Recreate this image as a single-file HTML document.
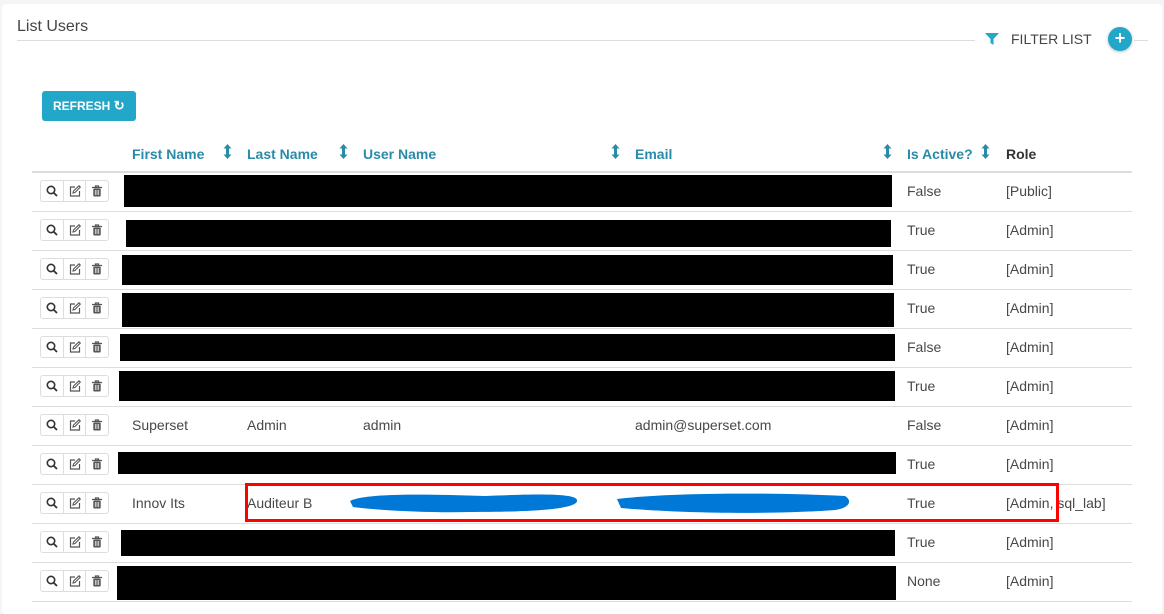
<!DOCTYPE html>
<html><head><meta charset="utf-8"><style>
*{margin:0;padding:0;box-sizing:border-box}
body{width:1164px;height:604px;background:#f5f5f5;font-family:"Liberation Sans",sans-serif;font-size:14px;color:#484848;position:relative;overflow:hidden}
.panel{position:absolute;left:2px;top:4px;width:1160px;height:610px;background:#fff;border-radius:4px}
.a{position:absolute}
.t{position:absolute;white-space:nowrap;line-height:16px}
.h{color:#2a8ba8;font-weight:bold;font-size:14px}
.line{position:absolute;left:32px;width:1100px;height:1px;background:#ddd}
.blk{position:absolute;background:#000}
.bg{position:absolute;left:40px;width:69px;height:22px;border:1px solid #ddd;border-radius:3px;display:flex;background:#fff}
.bg div{flex:1;border-right:1px solid #ddd;display:flex;align-items:center;justify-content:center}
.bg div:last-child{border-right:none}
.sort{position:absolute}
</style></head><body>
<div class="panel"></div>
<div class="t" style="left:17px;top:19px;font-size:16px;color:#444">List Users</div>
<div class="a" style="left:17px;top:40px;width:958px;height:1px;background:#ddd"></div>
<div class="a" style="left:1134px;top:40px;width:14px;height:1px;background:#ddd"></div>
<svg class="a" style="left:985px;top:32px" width="14" height="14" viewBox="0 0 14 14"><path d="M0 1h14L8.5 7v6l-3-2V7z" fill="#22a7c9"/></svg>
<div class="t" style="left:1011px;top:31px;font-size:14px;color:#444">FILTER LIST</div>
<div class="a" style="left:1108px;top:27px;width:24px;height:24px;border-radius:50%;background:#22a7c9;box-shadow:0 1px 3px rgba(0,0,0,.25);color:#fff;font-size:18px;line-height:23px;text-align:center;font-weight:bold">+</div>
<div class="a" style="left:42px;top:91px;width:94px;height:30px;background:#22a7c9;border-radius:3px;color:#fff;font-size:12px;font-weight:bold;line-height:30px;padding-left:11px">REFRESH <span style="font-size:13px">&#x21bb;</span></div>

<div class="t h" style="left:132px;top:146px">First Name</div>
<div class="t h" style="left:247px;top:146px">Last Name</div>
<div class="t h" style="left:363px;top:146px">User Name</div>
<div class="t h" style="left:635px;top:146px">Email</div>
<div class="t h" style="left:907px;top:146px">Is Active?</div>
<div class="t" style="left:1006px;top:146px;font-weight:bold;color:#333">Role</div>
<svg class="sort" style="left:223px;top:144px" width="9" height="15"><path d="M4.5 0L8.5 4.5H6V10.5H8.5L4.5 15L.5 10.5H3V4.5H.5Z" fill="#2a8ba8"/></svg>
<svg class="sort" style="left:339px;top:144px" width="9" height="15"><path d="M4.5 0L8.5 4.5H6V10.5H8.5L4.5 15L.5 10.5H3V4.5H.5Z" fill="#2a8ba8"/></svg>
<svg class="sort" style="left:611px;top:144px" width="9" height="15"><path d="M4.5 0L8.5 4.5H6V10.5H8.5L4.5 15L.5 10.5H3V4.5H.5Z" fill="#2a8ba8"/></svg>
<svg class="sort" style="left:883px;top:144px" width="9" height="15"><path d="M4.5 0L8.5 4.5H6V10.5H8.5L4.5 15L.5 10.5H3V4.5H.5Z" fill="#2a8ba8"/></svg>
<svg class="sort" style="left:981px;top:144px" width="9" height="15"><path d="M4.5 0L8.5 4.5H6V10.5H8.5L4.5 15L.5 10.5H3V4.5H.5Z" fill="#2a8ba8"/></svg>
<div class="line" style="top:171px;height:2px"></div>

<div class="line" style="top:211px"></div><div class="line" style="top:250px"></div><div class="line" style="top:289px"></div><div class="line" style="top:328px"></div><div class="line" style="top:367px"></div><div class="line" style="top:406px"></div><div class="line" style="top:445px"></div><div class="line" style="top:484px"></div><div class="line" style="top:523px"></div><div class="line" style="top:562px"></div><div class="line" style="top:601px"></div>

<div class="blk" style="left:124px;top:175px;width:768px;height:32px"></div>
<div class="blk" style="left:126px;top:220px;width:765px;height:27px"></div>
<div class="blk" style="left:122px;top:255px;width:771px;height:30px"></div>
<div class="blk" style="left:122px;top:293px;width:772px;height:34px"></div>
<div class="blk" style="left:120px;top:334px;width:775px;height:27px"></div>
<div class="blk" style="left:119px;top:371px;width:776px;height:30px"></div>
<div class="blk" style="left:118px;top:452px;width:778px;height:22px"></div>
<div class="blk" style="left:121px;top:530px;width:774px;height:26px"></div>
<div class="blk" style="left:117px;top:566px;width:779px;height:34px"></div>

<div class="t" style="left:907px;top:183px">False</div><div class="t" style="left:1006px;top:183px">[Public]</div>
<div class="t" style="left:907px;top:222px">True</div><div class="t" style="left:1006px;top:222px">[Admin]</div>
<div class="t" style="left:907px;top:261px">True</div><div class="t" style="left:1006px;top:261px">[Admin]</div>
<div class="t" style="left:907px;top:300px">True</div><div class="t" style="left:1006px;top:300px">[Admin]</div>
<div class="t" style="left:907px;top:339px">False</div><div class="t" style="left:1006px;top:339px">[Admin]</div>
<div class="t" style="left:907px;top:378px">True</div><div class="t" style="left:1006px;top:378px">[Admin]</div>
<div class="t" style="left:132px;top:417px">Superset</div><div class="t" style="left:247px;top:417px">Admin</div><div class="t" style="left:363px;top:417px">admin</div><div class="t" style="left:635px;top:417px">admin@superset.com</div>
<div class="t" style="left:907px;top:417px">False</div><div class="t" style="left:1006px;top:417px">[Admin]</div>
<div class="t" style="left:907px;top:456px">True</div><div class="t" style="left:1006px;top:456px">[Admin]</div>
<div class="t" style="left:132px;top:495px">Innov Its</div><div class="t" style="left:247px;top:495px">Auditeur B</div>
<div class="t" style="left:907px;top:495px">True</div><div class="t" style="left:1006px;top:495px">[Admin, sql_lab]</div>
<div class="t" style="left:907px;top:534px">True</div><div class="t" style="left:1006px;top:534px">[Admin]</div>
<div class="t" style="left:907px;top:573px">None</div><div class="t" style="left:1006px;top:573px">[Admin]</div>

<svg class="a" style="left:345px;top:490px" width="510" height="30"><path d="M5 11 C20 3 80 4 140 6 C190 4 230 3 232 10 C234 18 200 22 125 22 C80 23 30 20 8 17 Z" fill="#0078d7"/><path d="M272 9 C320 3 420 2 500 6 C508 11 504 18 490 20 C420 25 330 23 276 18 Z" fill="#0078d7"/></svg>
<div class="a" style="left:245px;top:483px;width:814px;height:39px;border:3px solid #f00"></div>

<div class="bg" style="top:180px"><div><svg width="12" height="12"><circle cx="5" cy="5" r="3.7" fill="none" stroke="#333" stroke-width="1.6"/><path d="M7.7 7.7L11 11" stroke="#333" stroke-width="1.8"/></svg></div><div><svg width="12" height="12"><path d="M6 2H1.5v9h9V6" fill="none" stroke="#555" stroke-width="1.2"/><path d="M4 8l.5-2L10 .8l1.3 1.3L6 7.5z" fill="none" stroke="#555" stroke-width="1.1"/></svg></div><div><svg width="12" height="12"><path d="M1 2.5h10M4.5 2.5V1h3v1.5" stroke="#555" stroke-width="1.3" fill="none"/><rect x="2.3" y="3.5" width="7.4" height="8" rx="1" fill="#555"/><path d="M4.3 5v5M6 5v5M7.7 5v5" stroke="#fff" stroke-width=".7"/></svg></div></div>
<div class="bg" style="top:219px"><div><svg width="12" height="12"><circle cx="5" cy="5" r="3.7" fill="none" stroke="#333" stroke-width="1.6"/><path d="M7.7 7.7L11 11" stroke="#333" stroke-width="1.8"/></svg></div><div><svg width="12" height="12"><path d="M6 2H1.5v9h9V6" fill="none" stroke="#555" stroke-width="1.2"/><path d="M4 8l.5-2L10 .8l1.3 1.3L6 7.5z" fill="none" stroke="#555" stroke-width="1.1"/></svg></div><div><svg width="12" height="12"><path d="M1 2.5h10M4.5 2.5V1h3v1.5" stroke="#555" stroke-width="1.3" fill="none"/><rect x="2.3" y="3.5" width="7.4" height="8" rx="1" fill="#555"/><path d="M4.3 5v5M6 5v5M7.7 5v5" stroke="#fff" stroke-width=".7"/></svg></div></div>
<div class="bg" style="top:258px"><div><svg width="12" height="12"><circle cx="5" cy="5" r="3.7" fill="none" stroke="#333" stroke-width="1.6"/><path d="M7.7 7.7L11 11" stroke="#333" stroke-width="1.8"/></svg></div><div><svg width="12" height="12"><path d="M6 2H1.5v9h9V6" fill="none" stroke="#555" stroke-width="1.2"/><path d="M4 8l.5-2L10 .8l1.3 1.3L6 7.5z" fill="none" stroke="#555" stroke-width="1.1"/></svg></div><div><svg width="12" height="12"><path d="M1 2.5h10M4.5 2.5V1h3v1.5" stroke="#555" stroke-width="1.3" fill="none"/><rect x="2.3" y="3.5" width="7.4" height="8" rx="1" fill="#555"/><path d="M4.3 5v5M6 5v5M7.7 5v5" stroke="#fff" stroke-width=".7"/></svg></div></div>
<div class="bg" style="top:297px"><div><svg width="12" height="12"><circle cx="5" cy="5" r="3.7" fill="none" stroke="#333" stroke-width="1.6"/><path d="M7.7 7.7L11 11" stroke="#333" stroke-width="1.8"/></svg></div><div><svg width="12" height="12"><path d="M6 2H1.5v9h9V6" fill="none" stroke="#555" stroke-width="1.2"/><path d="M4 8l.5-2L10 .8l1.3 1.3L6 7.5z" fill="none" stroke="#555" stroke-width="1.1"/></svg></div><div><svg width="12" height="12"><path d="M1 2.5h10M4.5 2.5V1h3v1.5" stroke="#555" stroke-width="1.3" fill="none"/><rect x="2.3" y="3.5" width="7.4" height="8" rx="1" fill="#555"/><path d="M4.3 5v5M6 5v5M7.7 5v5" stroke="#fff" stroke-width=".7"/></svg></div></div>
<div class="bg" style="top:336px"><div><svg width="12" height="12"><circle cx="5" cy="5" r="3.7" fill="none" stroke="#333" stroke-width="1.6"/><path d="M7.7 7.7L11 11" stroke="#333" stroke-width="1.8"/></svg></div><div><svg width="12" height="12"><path d="M6 2H1.5v9h9V6" fill="none" stroke="#555" stroke-width="1.2"/><path d="M4 8l.5-2L10 .8l1.3 1.3L6 7.5z" fill="none" stroke="#555" stroke-width="1.1"/></svg></div><div><svg width="12" height="12"><path d="M1 2.5h10M4.5 2.5V1h3v1.5" stroke="#555" stroke-width="1.3" fill="none"/><rect x="2.3" y="3.5" width="7.4" height="8" rx="1" fill="#555"/><path d="M4.3 5v5M6 5v5M7.7 5v5" stroke="#fff" stroke-width=".7"/></svg></div></div>
<div class="bg" style="top:375px"><div><svg width="12" height="12"><circle cx="5" cy="5" r="3.7" fill="none" stroke="#333" stroke-width="1.6"/><path d="M7.7 7.7L11 11" stroke="#333" stroke-width="1.8"/></svg></div><div><svg width="12" height="12"><path d="M6 2H1.5v9h9V6" fill="none" stroke="#555" stroke-width="1.2"/><path d="M4 8l.5-2L10 .8l1.3 1.3L6 7.5z" fill="none" stroke="#555" stroke-width="1.1"/></svg></div><div><svg width="12" height="12"><path d="M1 2.5h10M4.5 2.5V1h3v1.5" stroke="#555" stroke-width="1.3" fill="none"/><rect x="2.3" y="3.5" width="7.4" height="8" rx="1" fill="#555"/><path d="M4.3 5v5M6 5v5M7.7 5v5" stroke="#fff" stroke-width=".7"/></svg></div></div>
<div class="bg" style="top:414px"><div><svg width="12" height="12"><circle cx="5" cy="5" r="3.7" fill="none" stroke="#333" stroke-width="1.6"/><path d="M7.7 7.7L11 11" stroke="#333" stroke-width="1.8"/></svg></div><div><svg width="12" height="12"><path d="M6 2H1.5v9h9V6" fill="none" stroke="#555" stroke-width="1.2"/><path d="M4 8l.5-2L10 .8l1.3 1.3L6 7.5z" fill="none" stroke="#555" stroke-width="1.1"/></svg></div><div><svg width="12" height="12"><path d="M1 2.5h10M4.5 2.5V1h3v1.5" stroke="#555" stroke-width="1.3" fill="none"/><rect x="2.3" y="3.5" width="7.4" height="8" rx="1" fill="#555"/><path d="M4.3 5v5M6 5v5M7.7 5v5" stroke="#fff" stroke-width=".7"/></svg></div></div>
<div class="bg" style="top:453px"><div><svg width="12" height="12"><circle cx="5" cy="5" r="3.7" fill="none" stroke="#333" stroke-width="1.6"/><path d="M7.7 7.7L11 11" stroke="#333" stroke-width="1.8"/></svg></div><div><svg width="12" height="12"><path d="M6 2H1.5v9h9V6" fill="none" stroke="#555" stroke-width="1.2"/><path d="M4 8l.5-2L10 .8l1.3 1.3L6 7.5z" fill="none" stroke="#555" stroke-width="1.1"/></svg></div><div><svg width="12" height="12"><path d="M1 2.5h10M4.5 2.5V1h3v1.5" stroke="#555" stroke-width="1.3" fill="none"/><rect x="2.3" y="3.5" width="7.4" height="8" rx="1" fill="#555"/><path d="M4.3 5v5M6 5v5M7.7 5v5" stroke="#fff" stroke-width=".7"/></svg></div></div>
<div class="bg" style="top:492px"><div><svg width="12" height="12"><circle cx="5" cy="5" r="3.7" fill="none" stroke="#333" stroke-width="1.6"/><path d="M7.7 7.7L11 11" stroke="#333" stroke-width="1.8"/></svg></div><div><svg width="12" height="12"><path d="M6 2H1.5v9h9V6" fill="none" stroke="#555" stroke-width="1.2"/><path d="M4 8l.5-2L10 .8l1.3 1.3L6 7.5z" fill="none" stroke="#555" stroke-width="1.1"/></svg></div><div><svg width="12" height="12"><path d="M1 2.5h10M4.5 2.5V1h3v1.5" stroke="#555" stroke-width="1.3" fill="none"/><rect x="2.3" y="3.5" width="7.4" height="8" rx="1" fill="#555"/><path d="M4.3 5v5M6 5v5M7.7 5v5" stroke="#fff" stroke-width=".7"/></svg></div></div>
<div class="bg" style="top:531px"><div><svg width="12" height="12"><circle cx="5" cy="5" r="3.7" fill="none" stroke="#333" stroke-width="1.6"/><path d="M7.7 7.7L11 11" stroke="#333" stroke-width="1.8"/></svg></div><div><svg width="12" height="12"><path d="M6 2H1.5v9h9V6" fill="none" stroke="#555" stroke-width="1.2"/><path d="M4 8l.5-2L10 .8l1.3 1.3L6 7.5z" fill="none" stroke="#555" stroke-width="1.1"/></svg></div><div><svg width="12" height="12"><path d="M1 2.5h10M4.5 2.5V1h3v1.5" stroke="#555" stroke-width="1.3" fill="none"/><rect x="2.3" y="3.5" width="7.4" height="8" rx="1" fill="#555"/><path d="M4.3 5v5M6 5v5M7.7 5v5" stroke="#fff" stroke-width=".7"/></svg></div></div>
<div class="bg" style="top:570px"><div><svg width="12" height="12"><circle cx="5" cy="5" r="3.7" fill="none" stroke="#333" stroke-width="1.6"/><path d="M7.7 7.7L11 11" stroke="#333" stroke-width="1.8"/></svg></div><div><svg width="12" height="12"><path d="M6 2H1.5v9h9V6" fill="none" stroke="#555" stroke-width="1.2"/><path d="M4 8l.5-2L10 .8l1.3 1.3L6 7.5z" fill="none" stroke="#555" stroke-width="1.1"/></svg></div><div><svg width="12" height="12"><path d="M1 2.5h10M4.5 2.5V1h3v1.5" stroke="#555" stroke-width="1.3" fill="none"/><rect x="2.3" y="3.5" width="7.4" height="8" rx="1" fill="#555"/><path d="M4.3 5v5M6 5v5M7.7 5v5" stroke="#fff" stroke-width=".7"/></svg></div></div>
</body></html>
